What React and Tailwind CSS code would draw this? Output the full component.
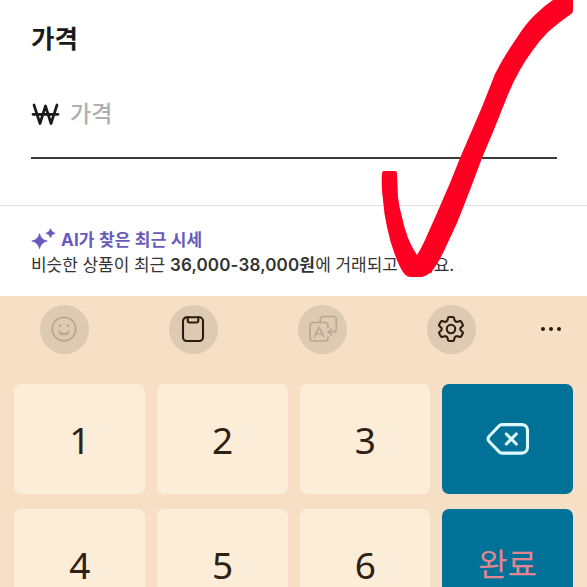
const TEXT = "font-['Inter','Noto_Sans_CJK_KR',sans-serif] [font-feature-settings:'calt'_0]";

function Key({ children }) {
  return (
    <div className="flex h-[110px] items-center justify-center rounded-[7px] bg-[#fbedd8] pl-px font-['Noto_Sans',sans-serif] text-[37px] leading-none text-[#2e2113]">
      {children}
    </div>
  );
}

function ToolButton({ children }) {
  return (
    <div className="flex size-[49px] items-center justify-center rounded-full bg-[#dccab3] pr-px pb-px">
      {children}
    </div>
  );
}

const stroke = {
  fill: "none",
  strokeLinecap: "round",
  strokeLinejoin: "round",
};

function Smile() {
  return (
    <svg width="28" height="28" viewBox="0 0 28 28" {...stroke} stroke="#b8a793" strokeWidth="1.8">
      <circle cx="14" cy="14" r="11.7" />
      <path d="M8.5 16c1.200 5 9.800 5 11 0-1.500 3-9.500 3-11 0Z" strokeWidth="1.2" />
      <path d="M10 10.6v.5M18 10.6v.5" strokeWidth="2.4" />
    </svg>
  );
}

function Clipboard() {
  return (
    <svg width="28" height="28" viewBox="0 0 28 28" {...stroke} stroke="#2c1d0e" strokeWidth="2.1">
      <rect x="4" y="2.3" width="20" height="23.7" rx="3.8" />
      <path d="M8.7 2.300v3.200a2 2 0 0 0 2 2h6.600a2 2 0 0 0 2-2V2.300" />
    </svg>
  );
}

function Translate() {
  return (
    <svg className="translate-x-px" width="30" height="30" viewBox="0 0 30 30" {...stroke} stroke="#b8a793" strokeWidth="1.7">
      <path d="M12.300 8V5.500a3 3 0 0 1 3-3h10a3 3 0 0 1 3 3V15a3 3 0 0 1-3 3H21.500" />
      <path d="M20 13.500v-2a3 3 0 0 0-3-3H5a3 3 0 0 0-3 3V24a3 3 0 0 0 3 3h12a3 3 0 0 0 3-3v-1" />
      <path d="m6.500 22.500 4.300-8.800h.6l4.300 8.800M8.200 20h5.800M23.500 15l-3.200 3 3.200 3" />
    </svg>
  );
}

function Gear() {
  return (
    <svg width="28" height="28" viewBox="0 0 28 28" {...stroke} stroke="#2c1d0e" strokeWidth="2.1">
      <circle cx="14" cy="14" r="4.2" />
      <path d="M12.1 2h3.8q.9 0 1.1.9l.5 2.2q.2.8.9 1.2l.8.4q.7.4 1.5.1l2.1-.7q.9-.3 1.3.5l1.7 2.9q.5.8-.2 1.4L23.9 12.500q-.6.6-.6 1.500t.6 1.500l1.700 1.600q.7.6.2 1.400l-1.700 2.900q-.4.8-1.300.5l-2.100-.7q-.8-.3-1.500.1l-.8.4q-.7.4-.9 1.200l-.5 2.200q-.2.9-1.100.9h-3.800q-.9 0-1.100-.9l-.5-2.200q-.2-.8-.9-1.200l-.8-.4q-.7-.4-1.500-.1l-2.100.7q-.9.3-1.300-.5l-1.700-2.900q-.5-.8.2-1.400l1.700-1.600q.6-.6.6-1.500t-.6-1.500l-1.700-1.600q-.7-.6-.2-1.400l1.700-2.900q.4-.8 1.300-.5l2.100.7q.8.3 1.500-.1l.8-.4q.7-.4.9-1.200l.5-2.200Q11.200 2 12.100 2Z" />
    </svg>
  );
}

function Backspace() {
  return (
    <svg width="44" height="34" viewBox="0 0 44 34" {...stroke} stroke="#dcfaff" strokeWidth="3.1">
      <path d="M16 2.600h20a5.500 5.500 0 0 1 5.500 5.500v17.500a5.500 5.500 0 0 1-5.500 5.500H16q-1.500 0-2.800-1.200L3.200 19.500q-2.200-2.600 0-5.200L13.200 3.800Q14.500 2.600 16 2.600Z" />
      <path d="m20.300 12 10 10m0-10-10 10" />
    </svg>
  );
}

export default function App() {
  return (
    <div className={`relative h-[587px] w-[587px] overflow-hidden bg-white ${TEXT}`}>
      <section className="flex h-[206px] flex-col border-b border-[#dedede] px-[31px] pt-[20px]">
        <h1 className="h-[38px] whitespace-nowrap text-[25.5px] font-bold leading-[38px] text-[#1b1b1b]">가격</h1>
        <div className="mt-[37px] flex h-[64px] w-[526px] items-start border-b-2 border-[#3a3a3a]">
          <svg className="mt-[8px]" width="29" height="23" viewBox="0 0 29 23" {...stroke} stroke="#1b1b1b" strokeWidth="2.7">
            <path d="m3 2 6 18.500L14.500 3 20 20.500 26 2M2 11.300h25" />
          </svg>
          <span className="ml-[10px] whitespace-nowrap text-[23px] font-medium leading-[38px] text-[#afafaf]">가격</span>
        </div>
      </section>

      <section className="flex h-[90px] flex-col px-[31px] pt-[21px] text-[#333]">
        <div className="flex h-[25px] items-center text-[#6959bd]">
          <svg width="25" height="23" viewBox="0 0 25 23" fill="currentColor" stroke="currentColor" strokeWidth="0.6" strokeLinejoin="round">
            <path d="M8.500 5.500q1.500 6.300 7.800 7.500-6.300 1.500-7.800 7.800Q7.200 14.500.700 13q6.500-1.200 7.800-7.500ZM19.500.500q.8 3.800 4.700 4.700-3.900.9-4.700 4.700-.8-3.800-4.700-4.700 3.900-.9 4.700-4.700Z" />
          </svg>
          <span className="ml-[5px] whitespace-nowrap pt-px text-[17px] font-bold leading-[25px] tracking-[0.2px]">AI가 찾은 최근 시세</span>
        </div>
        <p className="mt-px h-[25px] whitespace-nowrap text-[17px] leading-[25px] tracking-[-0.05px]">
          비슷한 상품이 최근 <b className="font-semibold tracking-[0.15px]">36,000-38,000원</b>에 거래되고 있어요.
        </p>
      </section>

      <section className="flex h-[291px] flex-col bg-[#f6dfc5]">
        <div className="flex h-[88px] shrink-0 items-start pl-[40px] pt-[9px]">
          <div className="flex gap-[80px]">
            <ToolButton><Smile /></ToolButton>
            <ToolButton><Clipboard /></ToolButton>
            <ToolButton><Translate /></ToolButton>
            <ToolButton><Gear /></ToolButton>
          </div>
          <div className="ml-[65px] flex h-[48px] items-center gap-[4px]">
            <i className="size-[4px] rounded-full bg-[#2c1d0e]" />
            <i className="size-[4px] rounded-full bg-[#2c1d0e]" />
            <i className="size-[4px] rounded-full bg-[#2c1d0e]" />
          </div>
        </div>
        <div className="grid shrink-0 grid-cols-4 gap-x-[12px] gap-y-[15px] px-[14px]">
          <Key>1</Key>
          <Key>2</Key>
          <Key>3</Key>
          <div className="flex h-[110px] items-center justify-center rounded-[7px] bg-[#007298]"><Backspace /></div>
          <Key>4</Key>
          <Key>5</Key>
          <Key>6</Key>
          <div className="flex h-[110px] items-center justify-center rounded-[7px] bg-[#007298] pb-[4px] font-['Noto_Sans_CJK_KR',sans-serif] text-[32px] leading-none text-[#e38491]">완료</div>
        </div>
      </section>

      <svg className="pointer-events-none absolute left-0 top-0" width="587" height="296" viewBox="0 0 587 296">
        <path
          fill="#ff0022"
          d="M553 0Q544 6 537 13 528 21 520 33L510 48Q502 60 495 74L482 107 460 158 450 183 437 213 425 240Q421 249 417 255 412 248 408 238 404 227 402 217 399 207 398 197L397 173Q397 171 395 171L384 171Q382 171 382 174 381 186 383 200 384 214 387 227 390 242 395 255 399 266 403 272 406 277 411 277L422 277Q429 275 433 270 438 263 443 253L457 223 470 190 482 158 493 132 507 97Q513 82 520 70 526 59 533 50 540 40 548 32 558 23 571 14 573 13 573 10L573 0Z"
        />
      </svg>
    </div>
  );
}
